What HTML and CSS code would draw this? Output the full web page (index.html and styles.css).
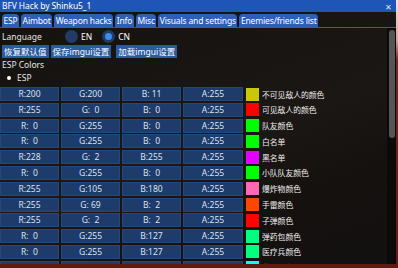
FILE: index.html
```html
<!DOCTYPE html>
<html lang="en">
<head>
    <meta charset="UTF-8">
    <title>BFV Hack by Shinku5_1</title>
    <link rel="stylesheet" href="styles.css">
</head>
<body>
    <div class="window">
        <div class="title-bar">
            <span class="title">BFV Hack by Shinku5_1</span>
            <span class="close">&#x2715;</span>
        </div>
        <div class="tabs">
            <span class="tab">ESP</span>
            <span class="tab">Aimbot</span>
            <span class="tab">Weapon hacks</span>
            <span class="tab">Info</span>
            <span class="tab">Misc</span>
            <span class="tab">Visuals and settings</span>
            <span class="tab">Enemies/friends list</span>
        </div>
        <div class="body">
            <div class="content">
                <div class="lang-row">
                    <span class="label">Language</span>
                    <span class="radio"></span><span class="radio-text">EN</span>
                    <span class="radio checked"></span><span class="radio-text">CN</span>
                </div>
                <div class="btn-row">
                    <span class="btn">恢复默认值</span>
                    <span class="btn">保存imgui设置</span>
                    <span class="btn">加载imgui设置</span>
                </div>
                <div class="label line">ESP Colors</div>
                <div class="label line bullet-line"><span class="bullet"></span>ESP</div>
                <div class="color-table" id="colorTable"></div>
            </div>
            <div class="scrollbar">
                <div class="thumb"></div>
            </div>
        </div>
    </div>

    <script>
        // ESP colour entries: r, g, b, a, name
        const colors = [
            [200, 200, 11, 255, '不可见敌人的颜色'],
            [255, 0, 0, 255, '可见敌人的颜色'],
            [0, 255, 0, 255, '队友颜色'],
            [0, 255, 0, 255, '白名单'],
            [228, 2, 255, 255, '黑名单'],
            [0, 255, 0, 255, '小队队友颜色'],
            [255, 105, 180, 255, '爆炸物颜色'],
            [255, 69, 2, 255, '手雷颜色'],
            [255, 2, 2, 255, '子弹颜色'],
            [0, 255, 127, 255, '弹药包颜色'],
            [0, 255, 127, 255, '医疗兵颜色'],
            [0, 255, 255, 255, '载具颜色']
        ];

        const pad = (n) => String(n).padStart(3, ' ');
        const table = document.getElementById('colorTable');

        colors.forEach(([r, g, b, a, name]) => {
            const row = document.createElement('div');
            row.className = 'color-row';
            row.innerHTML =
                `<span class="cell">R:${pad(r)}</span>` +
                `<span class="cell">G:${pad(g)}</span>` +
                `<span class="cell">B:${pad(b)}</span>` +
                `<span class="cell">A:${pad(a)}</span>` +
                `<span class="swatch" style="background: rgb(${r}, ${g}, ${b})"></span>` +
                `<span class="name">${name}</span>`;
            table.appendChild(row);
        });
    </script>
</body>
</html>
```

FILE: styles.css
```css
body {
    margin: 0;
    width: 398px;
    height: 268px;
    overflow: hidden;
    background: linear-gradient(180deg, #f3e6dc 0px, #d9a78c 40px, #7a2614 60px, #5e1c0e 100%);
    font-family: "Noto Sans", "Noto Sans CJK SC", sans-serif;
    font-size: 8.5px;
    color: #e6e6e6;
}

.window {
    width: 396px;
    height: 264px;
    display: flex;
    flex-direction: column;
    background: linear-gradient(160deg, #15110f 0%, #1b1714 55%, #15110f 75%, #121010 100%);
    overflow: hidden;
}

.title-bar {
    height: 12px;
    flex: none;
    background-color: #1f55b6;
    display: flex;
    align-items: center;
    justify-content: space-between;
    padding: 0 4px 0 2px;
    color: #fff;
}

.title {
    font-size: 8.5px;
    letter-spacing: -0.1px;
    line-height: 12px;
}

.close {
    font-size: 8px;
    color: #dfe8f7;
}

.tabs {
    flex: none;
    display: flex;
    gap: 2px;
    padding: 2px 10px 0 2px;
    border-bottom: 1px solid #2c5fb4;
    letter-spacing: -0.15px;
}

.tab {
    background-color: #2d60b5;
    color: #fff;
    border-radius: 4px 4px 0 0;
    padding: 0 1.5px;
    height: 13px;
    line-height: 13px;
    white-space: nowrap;
}

.body {
    flex: 1;
    display: flex;
    min-height: 0;
}

.content {
    flex: 1;
    overflow: hidden;
    padding-top: 2px;
}

.lang-row {
    display: flex;
    align-items: center;
    height: 13px;
    padding-left: 2px;
}

.lang-row .label {
    width: 63px;
}

.radio {
    width: 13px;
    height: 13px;
    border-radius: 50%;
    background-color: #213a68;
    box-sizing: border-box;
    margin-right: 3px;
}

.radio.checked {
    border: 3px solid #213a68;
    background-color: #3c8cf0;
    margin-left: 10px;
}

.radio-text {
    color: #fff;
}

.btn-row {
    display: flex;
    gap: 2px;
    padding: 2px 0 0 2px;
}

.btn {
    background-color: #2a5a9f;
    color: #fff;
    height: 13px;
    line-height: 13px;
    padding: 0 2px;
    white-space: nowrap;
}

.btn:last-child {
    margin-left: 3px;
}

.line {
    height: 12px;
    line-height: 12px;
    padding-left: 2px;
    margin-top: 1px;
}

.bullet-line {
    display: flex;
    align-items: center;
}

.bullet {
    width: 4px;
    height: 4px;
    border-radius: 50%;
    background-color: #fff;
    margin: 0 6px 0 5px;
}

.color-table {
    display: flex;
    flex-direction: column;
    gap: 1.8px;
    margin-top: 3px;
}

.color-row {
    display: flex;
    align-items: center;
    height: 14px;
}

.cell {
    width: 59px;
    height: 14px;
    box-sizing: border-box;
    margin-right: 2px;
    background-color: #1d3b6b;
    border: 1px solid #26477a;
    color: #dbe3ee;
    text-align: center;
    line-height: 12px;
    white-space: pre;
}

.cell:nth-child(4) {
    width: 60px;
}

.swatch {
    width: 13px;
    height: 13px;
    margin: 0 3px 0 1px;
}

.name {
    font-size: 7.8px;
    color: #eee;
    white-space: nowrap;
}

.scrollbar {
    width: 9px;
    flex: none;
    background-color: #0c0a09;
    padding: 2px 1px 0 2px;
    box-sizing: border-box;
}

.thumb {
    height: 108px;
    border-radius: 3px;
    background-color: #555;
}
```
